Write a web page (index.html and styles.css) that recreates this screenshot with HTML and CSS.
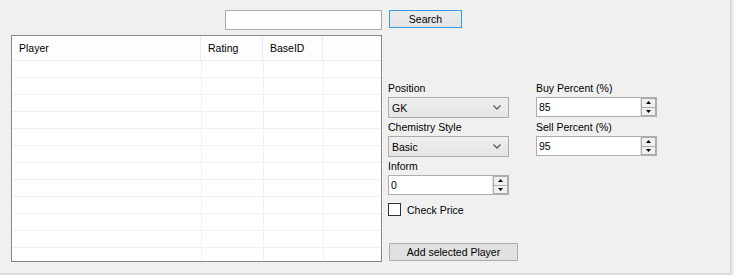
FILE: index.html
```html
<!DOCTYPE html>
<html lang="en">
<head>
    <meta charset="UTF-8">
    <title>Add Player</title>
    <link rel="stylesheet" href="styles.css">
</head>
<body>
    <div class="form">
        <div class="search-row">
            <input type="text" class="textbox search-box">
            <button class="btn btn-default">Search</button>
        </div>

        <div class="main">
            <div class="listview">
                <div class="lv-header">
                    <div class="lv-col">Player</div>
                    <div class="lv-col">Rating</div>
                    <div class="lv-col">BaseID</div>
                    <div class="lv-col"></div>
                </div>
                <div class="lv-body">
                    <div class="lv-row"><span></span><span></span><span></span><span></span></div>
                    <div class="lv-row"><span></span><span></span><span></span><span></span></div>
                    <div class="lv-row"><span></span><span></span><span></span><span></span></div>
                    <div class="lv-row"><span></span><span></span><span></span><span></span></div>
                    <div class="lv-row"><span></span><span></span><span></span><span></span></div>
                    <div class="lv-row"><span></span><span></span><span></span><span></span></div>
                    <div class="lv-row"><span></span><span></span><span></span><span></span></div>
                    <div class="lv-row"><span></span><span></span><span></span><span></span></div>
                    <div class="lv-row"><span></span><span></span><span></span><span></span></div>
                    <div class="lv-row"><span></span><span></span><span></span><span></span></div>
                    <div class="lv-row"><span></span><span></span><span></span><span></span></div>
                    <div class="lv-row"><span></span><span></span><span></span><span></span></div>
                </div>
            </div>

            <div class="side">
                <div class="col">
                    <div class="field">
                        <label>Position</label>
                        <div class="combo">
                            <span>GK</span>
                            <svg width="8" height="5" viewBox="0 0 8 5"><polyline points="0.5,0.5 4,4 7.5,0.5" fill="none" stroke="#606060" stroke-width="1.4"/></svg>
                        </div>
                    </div>
                    <div class="field">
                        <label>Chemistry Style</label>
                        <div class="combo">
                            <span>Basic</span>
                            <svg width="8" height="5" viewBox="0 0 8 5"><polyline points="0.5,0.5 4,4 7.5,0.5" fill="none" stroke="#606060" stroke-width="1.4"/></svg>
                        </div>
                    </div>
                    <div class="field">
                        <label>Inform</label>
                        <div class="numeric">
                            <span class="num-value">0</span>
                            <div class="spin">
                                <div class="spin-up"><svg width="5" height="3" viewBox="0 0 5 3"><polygon points="2.5,0 5,3 0,3" fill="#000"/></svg></div>
                                <div class="spin-down"><svg width="5" height="3" viewBox="0 0 5 3"><polygon points="0,0 5,0 2.5,3" fill="#000"/></svg></div>
                            </div>
                        </div>
                    </div>
                    <div class="check-row">
                        <span class="checkbox"></span>
                        <span>Check Price</span>
                    </div>
                    <button class="btn btn-add">Add selected Player</button>
                </div>

                <div class="col">
                    <div class="field">
                        <label>Buy Percent (%)</label>
                        <div class="numeric">
                            <span class="num-value">85</span>
                            <div class="spin">
                                <div class="spin-up"><svg width="5" height="3" viewBox="0 0 5 3"><polygon points="2.5,0 5,3 0,3" fill="#000"/></svg></div>
                                <div class="spin-down"><svg width="5" height="3" viewBox="0 0 5 3"><polygon points="0,0 5,0 2.5,3" fill="#000"/></svg></div>
                            </div>
                        </div>
                    </div>
                    <div class="field">
                        <label>Sell Percent (%)</label>
                        <div class="numeric">
                            <span class="num-value">95</span>
                            <div class="spin">
                                <div class="spin-up"><svg width="5" height="3" viewBox="0 0 5 3"><polygon points="2.5,0 5,3 0,3" fill="#000"/></svg></div>
                                <div class="spin-down"><svg width="5" height="3" viewBox="0 0 5 3"><polygon points="0,0 5,0 2.5,3" fill="#000"/></svg></div>
                            </div>
                        </div>
                    </div>
                </div>
            </div>
        </div>
    </div>
</body>
</html>
```

FILE: styles.css
```css
* {
    margin: 0;
    padding: 0;
    box-sizing: border-box;
}

body {
    font-family: 'Liberation Sans', Arial, sans-serif;
    font-size: 10.5px;
    color: #000;
    background: #f0f0f0;
}

.form {
    width: 732px;
    height: 275px;
    background: #f0f0f0;
    border-right: 2px solid #dcdcdc;
    border-bottom: 2px solid #dcdcdc;
}

.search-row {
    display: flex;
    align-items: flex-start;
    height: 35px;
    padding: 10px 0 0 225px;
}

.textbox {
    background: #fff;
    border: 1px solid #abadb3;
    outline: none;
}

.search-box {
    width: 157px;
    height: 20px;
}

.btn {
    font-family: inherit;
    font-size: 10.5px;
    color: #000;
    background: #e1e1e1;
    border: 1px solid #adadad;
    height: 18px;
    line-height: 16px;
}

.btn-default {
    width: 73px;
    margin-left: 7px;
    border-color: #3c9aea;
    background: linear-gradient(#ececec, #e2e2e2);
}

.main {
    display: flex;
    align-items: flex-start;
    gap: 6px;
    padding-left: 11px;
}

/* listview */
.listview {
    width: 371px;
    height: 227px;
    background: #fff;
    border: 1px solid #828790;
    overflow: hidden;
}

.lv-header {
    display: grid;
    grid-template-columns: 189px 62px 60px 1fr;
    height: 25px;
    background: #fdfdfd;
    border-bottom: 1px solid #e3ecf8;
}

.lv-col {
    padding-left: 7px;
    line-height: 24px;
    border-right: 1px solid #e3ecf8;
}

.lv-col:last-child {
    border-right: none;
}

.lv-row {
    display: grid;
    grid-template-columns: 190px 62px 60px 1fr;
    height: 17px;
    border-bottom: 1px solid #f0f0f0;
}

.lv-row span {
    border-right: 1px solid #f0f0f0;
}

.lv-row span:last-child {
    border-right: none;
}

/* right side */
.side {
    display: flex;
    gap: 27px;
    padding-top: 46px;
}

.col {
    display: flex;
    flex-direction: column;
    width: 121px;
}

.field {
    margin-bottom: 3px;
}

.field label {
    display: block;
    line-height: 14px;
    margin-bottom: 2px;
}

.combo {
    display: flex;
    align-items: center;
    justify-content: space-between;
    height: 21px;
    padding: 0 7px 0 3px;
    border: 1px solid #acacac;
    background: linear-gradient(#efefef, #e5e5e5);
    margin-bottom: -1px;
}

.numeric {
    display: flex;
    height: 20px;
    background: #fff;
    border: 1px solid #abadb3;
}

.num-value {
    flex: 1;
    padding-left: 2px;
    line-height: 18px;
}

.spin {
    display: flex;
    flex-direction: column;
    width: 16px;
    border-left: 1px solid #e3e3e3;
}

.spin-up,
.spin-down {
    flex: 1;
    display: flex;
    align-items: center;
    justify-content: center;
    background: #f0f0f0;
    border: 1px solid #acacac;
}

.spin-up {
    border-bottom: none;
}

.check-row {
    display: flex;
    align-items: center;
    gap: 6px;
    margin-top: 5px;
    height: 13px;
}

.checkbox {
    width: 13px;
    height: 13px;
    background: #fff;
    border: 1px solid #333;
}

.btn-add {
    width: 129px;
    margin-top: 27px;
    margin-left: 1px;
}
```
